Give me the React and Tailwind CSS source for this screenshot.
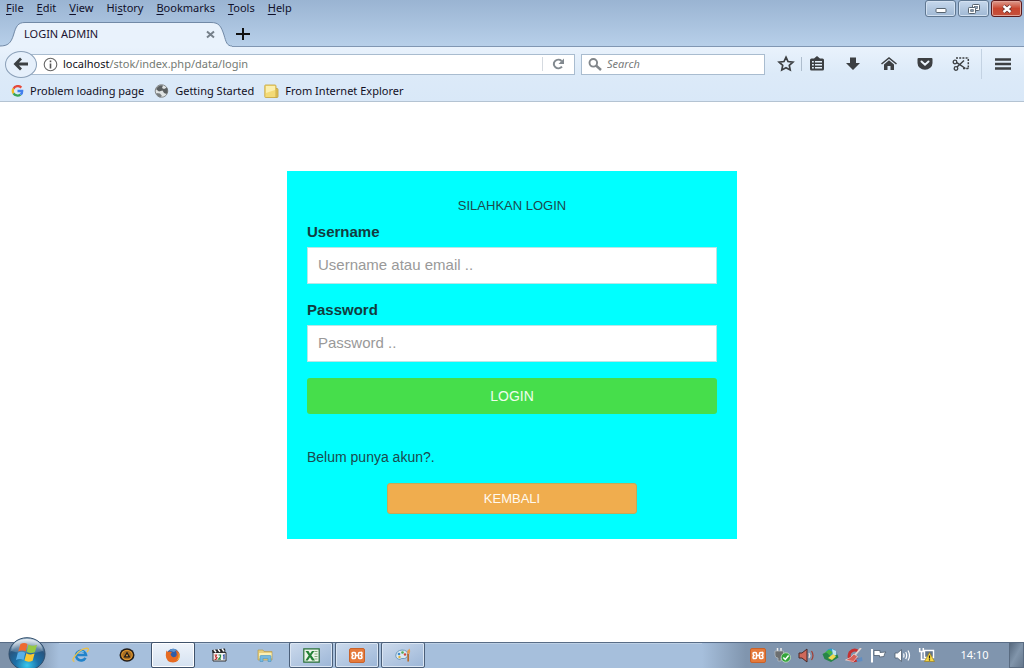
import React from "react";

const MENUS = [
  ["", "F", "ile"],
  ["", "E", "dit"],
  ["", "V", "iew"],
  ["Hi", "s", "tory"],
  ["", "B", "ookmarks"],
  ["", "T", "ools"],
  ["", "H", "elp"],
];

function MenuBar() {
  return (
    <div className="flex h-4 items-start justify-between pl-1.5 pr-0.5">
      <nav className="flex gap-[13px] text-[11px] leading-4 text-[#10102a]">
        {MENUS.map(([a, u, b]) => (
          <button key={a + u + b} type="button">
            {a}
            <span className="underline underline-offset-2">{u}</span>
            {b}
          </button>
        ))}
      </nav>
      <div className="flex gap-0.5">
        <button type="button" aria-label="Minimize" className="flex h-[17px] w-[31px] items-center justify-center rounded-[3px] border border-[#5f7791] bg-linear-to-b from-[#c6d8ec] to-[#a0b8d4] shadow-[inset_0_0_0_1px_#d3e1f1]">
          <svg width="12" height="12" viewBox="0 0 12 12"><rect x="1" y="5.5" width="10" height="4" rx="1" fill="#fff" stroke="#56636f" /></svg>
        </button>
        <button type="button" aria-label="Restore" className="flex h-[17px] w-[31px] items-center justify-center rounded-[3px] border border-[#5f7791] bg-linear-to-b from-[#c6d8ec] to-[#a0b8d4] shadow-[inset_0_0_0_1px_#d3e1f1]">
          <svg width="14" height="12" viewBox="0 0 14 12" fill="none">
            <rect x="5.5" y="1.5" width="7" height="6" rx=".8" fill="#fff" stroke="#56636f" />
            <rect x="7.5" y="3.5" width="3" height="2" fill="#8fa8c3" stroke="#56636f" strokeWidth=".7" />
            <rect x="1.5" y="4.5" width="7" height="6" rx=".8" fill="#fff" stroke="#56636f" />
            <rect x="3.7" y="6.7" width="2.6" height="1.6" fill="#8fa8c3" stroke="#56636f" strokeWidth=".8" />
          </svg>
        </button>
        <button type="button" aria-label="Close" className="flex h-[17px] w-[31px] items-center justify-center rounded-[3px] border border-[#5b1a1c] bg-linear-to-b from-[#dc9a8e] via-[#c8452f] to-[#c4513c] shadow-[inset_0_0_0_1px_#e2a59a]">
          <svg width="12" height="10" viewBox="0 0 12 10">
            <path d="M2.5 2l7 6M9.500 2l-7 6" stroke="#5a2a2a" strokeWidth="3.800" />
            <path d="M2.500 2l7 6M9.500 2l-7 6" stroke="#fff" strokeWidth="2.400" />
          </svg>
        </button>
      </div>
    </div>
  );
}

function TabStrip() {
  return (
    <div className="flex h-[31px] items-end">
      <div className="relative h-[25px] w-[232px]">
        <svg className="absolute inset-0" width="232" height="25" viewBox="0 0 232 25" fill="none">
          <path d="M0 25V24C8 24 11 21 13.500 13C16 4 18 .5 25 .5H211C219 .5 221 4 224 13C226 20 227 24 232 24V25Z" fill="#e9f2fc" />
          <path d="M0 24C8 24 11 21 13.500 13C16 4 18 .5 25 .5H211C219 .5 221 4 224 13C226 20 227 24 232 24" stroke="#7189a6" />
        </svg>
        <div className="relative flex h-6 items-center justify-between pl-6 pr-[17px]">
          <span className="text-[11px] text-[#1c1330]">LOGIN ADMIN</span>
          <button type="button" aria-label="Close tab">
            <svg className="block" width="9" height="9" viewBox="0 0 9 9"><path d="M1 1.500l7 6M8 1.500l-7 6" stroke="#76808a" strokeWidth="2" /></svg>
          </button>
        </div>
      </div>
      <div className="flex h-[25px] flex-1 items-center border-b border-[#8096b2] pl-1">
        <button type="button" aria-label="New tab">
          <svg className="block" width="14" height="14" viewBox="0 0 14 14"><path d="M7 1v12M0 7h14" stroke="#111" strokeWidth="2" /></svg>
        </button>
      </div>
    </div>
  );
}

function ToolButton({ label, children }) {
  return (
    <button type="button" aria-label={label} className="flex h-6 w-9 items-center justify-center">
      <svg width="18" height="18" viewBox="0 0 18 18" fill="none">{children}</svg>
    </button>
  );
}

function NavBar() {
  return (
    <div className="flex h-[34px] items-center pl-[5px]">
      <button type="button" aria-label="Back" className="relative z-10 -mr-4 flex h-[27px] w-8 items-center justify-center rounded-[50%] border border-[#8ba0b8] bg-[#e6f0fb]">
        <svg width="16" height="14" viewBox="0 0 16 14"><path d="M8 1.500L2.500 7L8 12.500M3 7H15" stroke="#3c4043" strokeWidth="2.800" fill="none" /></svg>
      </button>
      <div className="flex h-[21px] min-w-0 flex-1 items-center border border-[#a9bccf] bg-white pl-[21px]">
        <svg className="shrink-0" width="15" height="15" viewBox="0 0 15 15" fill="none">
          <circle cx="7.500" cy="7.500" r="6.300" stroke="#666" strokeWidth="1.100" />
          <path d="M7.500 3.600v1.700M7.500 6.500v5" stroke="#555" strokeWidth="1.600" />
        </svg>
        <div className="flex min-w-0 flex-1 items-center px-[5px] text-[11px] text-[#101018]">
          localhost<span className="text-[#747a74]">/stok/index.php/data/login</span>
        </div>
        <button type="button" aria-label="Reload" className="flex h-3.5 w-8 items-center justify-center border-l border-[#d5dae0]">
          <svg width="13" height="12" viewBox="0 0 13 12" fill="none">
            <path d="M10 8.700A4.600 4.300 0 1 1 9.600 2.900" stroke="#82898f" strokeWidth="2" />
            <path d="M12 .5V6H6.500Z" fill="#82898f" />
          </svg>
        </button>
      </div>
      <label className="ml-1.5 flex h-[21px] w-[184px] items-center gap-[5px] border border-[#a9bccf] bg-white pl-1.5">
        <svg width="14" height="13" viewBox="0 0 14 13" fill="none">
          <circle cx="5.300" cy="4.800" r="3.800" stroke="#81868a" strokeWidth="1.900" />
          <path d="M8 7.500L13 12" stroke="#81868a" strokeWidth="2.400" />
        </svg>
        <input aria-label="Search" placeholder="Search" className="w-32 bg-transparent text-[11px] italic outline-none placeholder:text-[#777b7b]" />
      </label>
      <div className="ml-[3px] flex items-center">
        <ToolButton label="Bookmark this page">
          <path d="M9 2.200l2 4.300 4.900.6-3.600 3.200.9 4.700L9 12.700 4.800 15l.9-4.700L2.100 7.100 7 6.500Z" stroke="#3d4043" strokeWidth="1.700" />
        </ToolButton>
        <span className="-mx-[3px] h-3.5 w-px bg-[#aebdcd]" />
        <ToolButton label="Show bookmarks">
          <path d="M3.500 3.500H6L9 1l3 2.500h2.500q1.500 0 1.500 1.500v9q0 1.500-1.500 1.500h-11Q2 15.500 2 14V5q0-1.500 1.500-1.500Z" fill="#3d4043" />
          <path d="M4 6.700h1.800M7 6.700h7M4 9.700h1.800M7 9.700h7M4 12.700h1.800M7 12.700h7" stroke="#e4effa" strokeWidth="1.500" />
        </ToolButton>
        <ToolButton label="Downloads"><path d="M6 2.500h6V8h4L9 15 2 8h4Z" fill="#3d4043" /></ToolButton>
        <ToolButton label="Home">
          <path d="M1.500 9L9 3l7.500 6" stroke="#3d4043" strokeWidth="1.600" />
          <path d="M9 5.300l5 4.200V15h-3.500v-4h-3v4H4V9.500Z" fill="#3d4043" />
        </ToolButton>
        <ToolButton label="Save to Pocket">
          <path d="M2.500 3h13q1 0 1 1v4a7.500 6.800 0 0 1-15 0V4q0-1 1-1Z" fill="#3d4043" />
          <path d="M5.500 6.500L9 9.700l3.500-3.200" stroke="#edf5fc" strokeWidth="2" strokeLinecap="round" />
        </ToolButton>
        <ToolButton label="Screenshot">
          <path d="M4 3h13M16.300 4v10M11 13.500h6" stroke="#3d4043" strokeWidth="1.500" strokeDasharray="2 1.200" />
          <circle cx="3" cy="7" r="1.800" stroke="#3d4043" strokeWidth="1.300" />
          <circle cx="4" cy="13.500" r="1.800" stroke="#3d4043" strokeWidth="1.300" />
          <path d="M4.800 7.700L13.500 13.500M5 12L12 5.500" stroke="#3d4043" strokeWidth="1.500" />
        </ToolButton>
        <span className="ml-0.5 h-[30px] w-px bg-[#c3d2e2]" />
        <button type="button" aria-label="Open menu" className="flex h-6 w-[42px] items-center justify-center">
          <svg width="16" height="12" viewBox="0 0 16 12"><path d="M0 1.500h16M0 6h16M0 10.500h16" stroke="#3d4043" strokeWidth="2.400" /></svg>
        </button>
      </div>
    </div>
  );
}

function BookmarksBar() {
  return (
    <div className="flex h-5 items-center gap-2.5 pl-[11px] text-[11px] text-[#12101f]">
      <a href="#problem" className="flex items-center gap-1.5">
        <svg width="13" height="12" viewBox="0 0 13 12" fill="none" strokeWidth="2.300">
          <path d="M10.300 2.600A4.700 4.500 0 0 0 2.500 3.700" stroke="#e5493a" />
          <path d="M2.500 3.700A4.700 4.500 0 0 0 2.500 8.300" stroke="#f3b924" />
          <path d="M2.500 8.300A4.700 4.500 0 0 0 9.500 9.600" stroke="#38a455" />
          <path d="M9.500 9.600Q11.400 8.200 11.200 6H6.500" stroke="#4280ed" />
        </svg>
        Problem loading page
      </a>
      <a href="#started" className="flex items-center gap-1.5">
        <svg width="15" height="14" viewBox="0 0 15 14">
          <circle cx="7.500" cy="7" r="6.300" fill="#dfe3e3" stroke="#85898a" />
          <path d="M2 5Q5 0 9 1.500L8 4l2 1 3-1.500q1.500 4-.5 6.500L10 9 8.500 6.500 5 7.500 3 6Z" fill="#5b5f60" />
          <path d="M2 9l4 .5L8 12l-2 1.500Q3 12 2 9Z" fill="#777c7e" />
        </svg>
        Getting Started
      </a>
      <a href="#folder" className="flex items-center gap-1.5">
        <svg width="15" height="15" viewBox="0 0 15 15">
          <path d="M11 4.500h2q1 0 1 1v7q0 1-1 1h-3Z" fill="#e2c559" stroke="#b99b3c" strokeWidth=".8" />
          <path d="M1.500 1h9.500q1 0 1 1v11.500H1.500q-.7 0-.7-.7V1.700q0-.7.7-.7Z" fill="#f3da76" stroke="#c9a945" strokeWidth=".9" />
          <path d="M2 2h9v4L2 9Z" fill="#fbefae" />
        </svg>
        From Internet Explorer
      </a>
    </div>
  );
}

function Field({ id, label, type, placeholder }) {
  return (
    <div className="mb-4">
      <label htmlFor={id} className="mb-[5px] block text-[15px] leading-5 font-bold text-[#123c40]">{label}</label>
      <input id={id} type={type} placeholder={placeholder} className="block h-[37px] w-full border border-[#b8e6e6] bg-white px-2.5 pb-0.5 text-[15px] outline-none placeholder:text-[#999]" />
    </div>
  );
}

function LoginCard() {
  return (
    <form className="w-[450px] max-w-full bg-[#00ffff] px-5 py-[25px] font-['Liberation_Sans',Arial,sans-serif] text-[#1c4a4d]" onSubmit={(e) => e.preventDefault()}>
      <h1 className="mb-1.5 text-center text-[13px] leading-5">SILAHKAN LOGIN</h1>
      <Field id="username" label="Username" type="text" placeholder="Username atau email .." />
      <Field id="password" label="Password" type="password" placeholder="Password .." />
      <button type="submit" className="h-9 w-full rounded-[3px] bg-[#46de4b] text-sm text-[#effdeb]">LOGIN</button>
      <p className="mt-[33px] text-[14px] leading-5">Belum punya akun?.</p>
      <div className="mt-4 flex justify-center">
        <button type="button" className="h-[31px] w-[250px] rounded-[3px] border border-[#c5a957] bg-[#f0ad4e] text-[13px] text-[#fffaf0]">KEMBALI</button>
      </div>
    </form>
  );
}

function XamppIcon() {
  return (
    <svg width="16" height="15" viewBox="0 0 16 15">
      <rect x=".5" y=".5" width="15" height="14" rx="1.500" fill="#e57a3b" stroke="#c9622a" />
      <path d="M5.500 4.500H4Q3 4.500 3 5.500T4 7.500Q3 8 3 9.300T4 10.500H5.500Q6.500 10.500 6.500 9.300V7.500H9.500V9.300Q9.500 10.500 10.500 10.500H12Q13 10.500 13 9.300T12 7.500Q13 7 13 5.500T12 4.500H10.500Q9.500 4.500 9.500 5.700V7.500H6.500V5.700Q6.500 4.500 5.500 4.500Z" fill="none" stroke="#fff" strokeWidth="1.500" />
    </svg>
  );
}

function TaskButton({ label, framed, active, children }) {
  const frame = active
    ? "border border-[#3f526b] bg-linear-to-b from-[#eef3fa] to-[#d5e2f1] shadow-[inset_0_0_0_1px_#ffffff]"
    : framed
      ? "border border-[#4b5f79] bg-linear-to-br from-[#ccdaec] to-[#9cb6d7] shadow-[inset_0_0_0_1px_#dbe6f3]"
      : "";
  return (
    <button type="button" aria-label={label} className={"flex h-[26px] w-11 items-center justify-center rounded-[2px] " + frame}>
      {children}
    </button>
  );
}

function StartOrb() {
  return (
    <svg className="absolute bottom-0 left-2" width="38" height="31" viewBox="0 0 38 31">
      <defs>
        <radialGradient id="orb" cx=".5" cy=".85" r=".8">
          <stop offset="0" stopColor="#37c8ee" />
          <stop offset=".4" stopColor="#1c70a8" />
          <stop offset=".75" stopColor="#28557f" />
          <stop offset="1" stopColor="#9db6cb" />
        </radialGradient>
        <linearGradient id="gloss" x2="0" y2="1">
          <stop offset="0" stopColor="#fff" stopOpacity=".75" />
          <stop offset="1" stopColor="#fff" stopOpacity=".1" />
        </linearGradient>
      </defs>
      <ellipse cx="19" cy="17" rx="18" ry="16.300" fill="url(#orb)" stroke="#304d6b" />
      <path d="M3 14Q5 2 19 2T35 14Q19 19 3 14Z" fill="url(#gloss)" />
      <path d="M12.500 7q3.500-2 7 0l-1.800 7.500q-3.500-2-7.500 0Z" fill="#ee6a30" />
      <path d="M20.500 7.500q4 2.300 8.500.2l-2 7.300q-4.300 2-8.300-.3Z" fill="#96c944" />
      <path d="M9.800 15.800q3.700-2 7.500 0l-1.800 7.200q-3.500-2-7.500 0Z" fill="#59afe8" />
      <path d="M18.300 16.200q4 2.200 8.300.4l-2 7.200q-4.300 2-8.100-.2Z" fill="#fbc730" />
    </svg>
  );
}

function TrayIcon({ label, children }) {
  return (
    <button type="button" aria-label={label} className="flex h-6 w-6 items-center justify-center">
      {children}
    </button>
  );
}

function Taskbar() {
  return (
    <footer className="relative flex h-[26px] shrink-0 items-center bg-[#a6bfdc] shadow-[inset_0_1px_0_#586c86,inset_0_2px_0_#bccfe4]">
      <div className="h-full w-[59px] bg-linear-to-r from-[#7e92aa] from-50% to-[#a6bfdc] shadow-[inset_0_1px_0_#586c86]">
        <button type="button" aria-label="Start" className="h-full w-full"><StartOrb /></button>
      </div>
      <div className="flex flex-1 gap-0.5">
        <TaskButton label="Internet Explorer">
          <svg width="18" height="16" viewBox="0 0 18 16" fill="none">
            <path d="M13.500 10.800A5 4.800 0 1 1 14 8H5" stroke="#2183ca" strokeWidth="2.600" />
            <path d="M5 5.500Q9 2.500 12 5" stroke="#72c8f1" />
            <path d="M2.500 14.500Q-1 14 3 9Q8 2 15 1.200Q18 1.500 15 5" stroke="#e9c04b" strokeWidth="1.300" />
          </svg>
        </TaskButton>
        <TaskButton label="Media player">
          <svg width="16" height="14" viewBox="0 0 16 14">
            <ellipse cx="8" cy="7" rx="7.500" ry="6.700" fill="#211c19" />
            <ellipse cx="8" cy="7" rx="5.900" ry="5.200" fill="#e79a2d" />
            <ellipse cx="8" cy="7" rx="4.800" ry="4.200" fill="#a86f24" />
            <path d="M8 3.500L11.500 9.500H4.500Z" fill="#211c19" />
            <path d="M8 6L9.300 8.300H6.700Z" fill="#f0a535" />
          </svg>
        </TaskButton>
        <TaskButton label="Firefox" framed active>
          <svg width="16" height="15" viewBox="0 0 16 15">
            <circle cx="8" cy="7.300" r="6.500" fill="#305da8" />
            <path d="M4 2.500Q8-.5 12 2L9 4Z" fill="#5b93ce" />
            <path d="M1.500 2.500L3 4Q5 3 7 4.500L5.500 6Q6 8.500 8 9.200Q11 9.500 11.800 7Q12 4 10.500 2.200Q14.700 3.500 14.800 8Q14 14.300 8 14.500Q1 14 .8 7.500Q.8 5 1.500 2.500Z" fill="#e66a22" />
            <path d="M13 4.500Q15 9 11.500 12.500Q15 11.500 14.800 7.500Z" fill="#f7bb38" />
          </svg>
        </TaskButton>
        <TaskButton label="Media Player Classic">
          <svg width="16" height="14" viewBox="0 0 16 14">
            <path d="M2 4.500h13V13H2Z" fill="#f4f4f4" stroke="#333" />
            <path d="M1 2L14 .5l.5 3L1.500 5Z" fill="#222" />
            <path d="M3 1.800l2 2.500M7 1.300l2 2.500M11 .8l2 2.500" stroke="#fff" strokeWidth="1.500" />
            <path d="M3.500 7h2L4.500 9 6 9.500 5 11.300H3.500" stroke="#c3302d" strokeWidth="1.200" fill="none" />
            <path d="M7.500 7h2v2l-2 2.200H10" stroke="#2d8d42" strokeWidth="1.200" fill="none" />
            <path d="M12 7.500l1-.5v4.500" stroke="#284ba5" strokeWidth="1.300" fill="none" />
          </svg>
        </TaskButton>
        <TaskButton label="File Explorer">
          <svg width="17" height="15" viewBox="0 0 17 15">
            <path d="M1 2h5l1 1.500h8V12H1Z" fill="#e9cf7c" stroke="#b89b4b" strokeWidth=".7" />
            <path d="M2 5h12.500v5H2Z" fill="#fbf0b5" />
            <path d="M3 13.500V8.500Q3 7.500 4 7.500h9q1 0 1 1v5h-3v-3H6v3Z" fill="#76b9df" stroke="#4a93bf" strokeWidth=".6" />
          </svg>
        </TaskButton>
        <TaskButton label="Excel" framed>
          <svg width="17" height="15" viewBox="0 0 17 15">
            <path d="M.8.8h15.400v13.400H.8Z" fill="#ebf4e8" stroke="#276f38" strokeWidth="1.200" />
            <path d="M11.500 3.500h3M11.500 6h3M11.500 8.500h3M11.500 11h3" stroke="#7eaa77" />
            <path d="M2.500 3h3L7 5.700 9 3h2.500L8.300 7.300 12 12.500H9L7 9.300 4.800 12.500H2.300L5.700 7.500Z" fill="#238036" />
          </svg>
        </TaskButton>
        <TaskButton label="XAMPP" framed><XamppIcon /></TaskButton>
        <TaskButton label="Paint" framed>
          <svg width="17" height="16" viewBox="0 0 17 16">
            <path d="M7 3Q13 3 12.500 8Q12 12 8 11.500Q6 11 5 12.500Q.5 12 .8 8Q1.500 3.500 7 3Z" fill="#dce9f2" stroke="#6f9bbd" />
            <circle cx="4" cy="7" r="1.300" fill="#3c8bcc" /><circle cx="7.500" cy="5.500" r="1.300" fill="#54a950" />
            <circle cx="10" cy="7.500" r="1.200" fill="#d5493a" /><circle cx="4.500" cy="10" r="1.200" fill="#e2b43a" />
            <path d="M13.200 7V14.500" stroke="#b86b2b" strokeWidth="1.700" /><path d="M12 6.500Q12 3 14.500 1.500Q16 4 14.500 7Z" fill="#e59a50" />
          </svg>
        </TaskButton>
      </div>
      <div className="flex h-full items-center bg-linear-to-r from-[#a6bfdc] to-[#8095ae] to-[44px] pl-11 shadow-[inset_0_1px_0_#586c86]">
        <TrayIcon label="XAMPP control panel"><XamppIcon /></TrayIcon>
        <TrayIcon label="Safely remove hardware">
          <svg width="17" height="16" viewBox="0 0 17 16">
            <path d="M3.500 1v3M7 1v3" stroke="#eee" strokeWidth="1.500" />
            <path d="M1 4h8.500v5Q9 11 7 11v3H4v-3Q1 11 1 8Z" fill="#6c6f70" stroke="#b9bec1" strokeWidth=".7" />
            <circle cx="11.800" cy="10.500" r="4.700" fill="#35a43b" stroke="#d4edcf" strokeWidth=".7" />
            <path d="M9.300 10.500l2 2 3.300-4" fill="none" stroke="#fff" strokeWidth="1.500" />
          </svg>
        </TrayIcon>
        <TrayIcon label="Audio manager">
          <svg width="17" height="15" viewBox="0 0 17 15">
            <path d="M1 5h3l5-4v13L4 10H1Z" fill="#d0695a" stroke="#4b2927" />
            <path d="M11 5q1.500 2.500 0 5" fill="none" stroke="#f0dcd8" strokeWidth="1.200" />
            <path d="M13.500 3q3 4.500 0 9" fill="none" stroke="#a33d33" strokeWidth="1.200" />
          </svg>
        </TrayIcon>
        <TrayIcon label="Download manager">
          <svg width="17" height="15" viewBox="0 0 17 15">
            <circle cx="9" cy="6" r="5.500" fill="#2d9bcb" />
            <path d="M1 6L7 1.500l4 3L7.500 8Z" fill="#46b444" />
            <path d="M10 1l4 2v5l-3-1Z" fill="#bfe3ef" />
            <path d="M.5 6l4-1.500 5 4.500 6-2.500 1 3L9 14 2.500 11Z" fill="#278548" />
            <path d="M6 10l5-4 3 2.500-4 3.500Z" fill="#f0d950" />
          </svg>
        </TrayIcon>
        <TrayIcon label="CCleaner">
          <svg width="18" height="15" viewBox="0 0 18 15">
            <path d="M13.500 3.500Q9 0 5 4.500Q2.500 10 7 12.500Q10 13.500 14 11" fill="none" stroke="#c53131" strokeWidth="3" />
            <path d="M16 0L10 7" stroke="#e2d4cf" strokeWidth="1.800" />
            <path d="M9 6l3.500 2.500-4 5L.5 12Q6 10 9 6Z" fill="#d4615a" stroke="#efd8d4" strokeWidth=".7" />
            <path d="M11 11l6-2 .5 4-5 1Z" fill="#608dc1" />
          </svg>
        </TrayIcon>
        <TrayIcon label="Action Center">
          <svg width="17" height="15" viewBox="0 0 17 15">
            <path d="M2 1v13.500" stroke="#fff" strokeWidth="2" />
            <path d="M4 2.500h6v2l6-.5q-2 1.500-2 4.500L9.500 9V7.500H4Z" fill="#fff" stroke="#4f5d6d" strokeWidth=".8" />
          </svg>
        </TrayIcon>
        <TrayIcon label="Volume">
          <svg width="17" height="15" viewBox="0 0 17 15">
            <path d="M1 5h2.500l4-3.500v12L3.500 10H1Z" fill="#fff" stroke="#4f5d6d" strokeWidth=".8" />
            <path d="M9.500 5.500q1 2 0 4M11.700 4q2 3.500 0 7M14 2.500q3 5 0 10" fill="none" stroke="#fff" strokeWidth="1.200" />
          </svg>
        </TrayIcon>
        <TrayIcon label="Network">
          <svg width="17" height="16" viewBox="0 0 17 16">
            <path d="M6.500 3.500h9v7h-9Z" fill="#63768c" stroke="#fff" strokeWidth="1.400" />
            <path d="M1.700 1v3.500h3.600V1M3.500 4.500v8H9" fill="none" stroke="#fff" strokeWidth="1.500" />
            <path d="M11.500 5.500l5 9h-10Z" fill="#f6d743" stroke="#9a7e22" strokeWidth=".7" />
            <path d="M11.500 8.500v3M11.500 12.300v1.300" stroke="#222" strokeWidth="1.200" />
          </svg>
        </TrayIcon>
        <time className="w-[71px] pl-0.5 text-center text-[11px] text-white">14:10</time>
        <button type="button" aria-label="Show desktop" className="h-[26px] w-[15px] border border-[#596b81] bg-linear-to-br from-[#57697e] via-[#8195ab] to-[#65778c]" />
      </div>
    </footer>
  );
}

export default function App() {
  return (
    <div className="flex min-h-screen flex-col bg-white font-['Noto_Sans','Open_Sans',sans-serif]">
      <header className="shrink-0 border-b border-[#b4c3d2]">
        <div className="bg-linear-to-b from-[#9ab4d2] to-[#b8d0ea]">
          <MenuBar />
          <TabStrip />
        </div>
        <div className="bg-linear-to-b from-[#e9f2fc] via-[#dceaf8] to-[#d9e8f8]">
          <NavBar />
          <BookmarksBar />
        </div>
      </header>
      <main className="flex flex-1 items-start justify-center pt-[69px]">
        <LoginCard />
      </main>
      <Taskbar />
    </div>
  );
}
